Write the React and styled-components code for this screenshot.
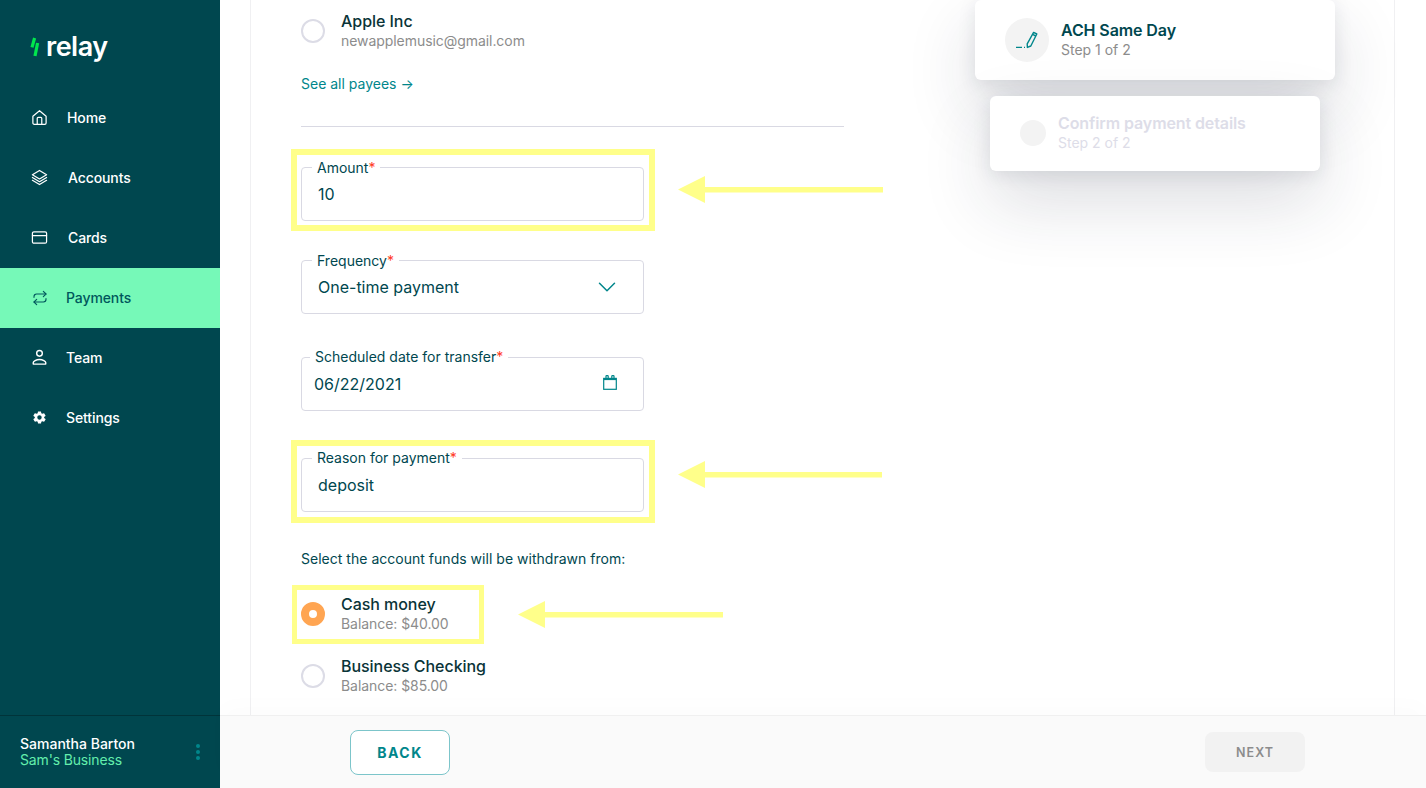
import React from "react";
import styled, { createGlobalStyle } from "styled-components";
import { ChevronDown, Repeat } from "lucide-react";
import { IoMdSettings } from "react-icons/io";

const GlobalStyle = createGlobalStyle`
  html, body { margin: 0; padding: 0; height: 100%; }
  body { font-family: Inter, "Liberation Sans", sans-serif; color: #00474f; background: #fff; }
  * { box-sizing: border-box; }
`;

const Page = styled.div`
  display: flex;
  width: 100%;
  height: 100vh;
  overflow: hidden;
`;

const Sidebar = styled.aside`
  flex: 0 0 220px;
  display: flex;
  flex-direction: column;
  background: #00474f;
  color: #fff;
`;

const Logo = styled.div`
  display: flex;
  align-items: center;
  gap: 6px;
  height: 88px;
  padding: 5px 0 0 30px;
  font-size: 27px;
  font-weight: 600;
  letter-spacing: -0.5px;
`;

const Nav = styled.nav`
  flex: 1;
  display: flex;
  flex-direction: column;
`;

const NavItem = styled.a`
  display: flex;
  align-items: center;
  gap: ${(p) => p.$gap || 18}px;
  height: 60px;
  padding: 0 0 1px 31px;
  font-size: 14px;
  font-weight: 500;
  letter-spacing: -0.1px;
  color: ${(p) => (p.$active ? "#00575c" : "#fff")};
  background: ${(p) => (p.$active ? "#76f9b8" : "transparent")};
`;

const IconSlot = styled.span`
  flex: 0 0 17px;
  display: flex;
  align-items: center;
  justify-content: center;
  width: 17px;
  height: 17px;
`;

const UserBlock = styled.div`
  display: flex;
  align-items: center;
  justify-content: space-between;
  height: 73px;
  padding: 0 20px;
  border-top: 1px solid #00343a;
  font-size: 14px;
  line-height: 16px;
`;

const UserName = styled.div`
  color: #fff;
  font-weight: 500;
`;

const BusinessName = styled.div`
  color: #63eeac;
  font-weight: 400;
  letter-spacing: -0.15px;
`;

const Dots = styled.div`
  display: flex;
  flex-direction: column;
  gap: 2px;
  span { width: 4px; height: 4px; border-radius: 50%; background: #00868b; }
`;

const Main = styled.main`
  flex: 1;
  min-width: 0;
  display: flex;
  flex-direction: column;
`;

const Scroller = styled.div`
  flex: 1;
  min-height: 0;
  overflow: hidden;
`;

const Panel = styled.div`
  display: flex;
  gap: 131px;
  height: 100%;
  margin: 0 31px 0 30px;
  padding-left: 50px;
  border-left: 1px solid #f0f0f2;
  border-right: 1px solid #f0f0f2;
`;

const FormColumn = styled.div`
  flex: 0 0 543px;
  padding-top: 11px;
`;

const OptionRow = styled.div`
  display: flex;
  align-items: center;
  gap: 16px;
  margin-top: ${(p) => p.$top || 0}px;
`;

const Radio = styled.span`
  flex: 0 0 24px;
  width: 24px;
  height: 24px;
  border-radius: 50%;
  background: #fff;
  border: ${(p) => (p.$checked ? "8px solid #ffa552" : "2px solid #dcdce6")};
`;

const OptionName = styled.div`
  font-size: 16px;
  font-weight: 500;
  line-height: 20px;
  letter-spacing: -0.05px;
  color: #0a3438;
`;

const OptionSub = styled.div`
  font-size: 14px;
  line-height: 20px;
  letter-spacing: -0.06px;
  color: #8c8c8c;
`;

const SeeAll = styled.a`
  display: block;
  margin-top: 23px;
  font-size: 14px;
  font-weight: 400;
  line-height: 20px;
  color: #00868b;
`;

const Divider = styled.hr`
  height: 1px;
  margin: 32px 0 0;
  border: 0;
  background: #d9d9e3;
`;

const Marked = styled.div`
  position: relative;
  margin-top: ${(p) => p.$top}px;
  &::after {
    content: "";
    position: absolute;
    inset: ${(p) => p.$inset};
    border: ${(p) => p.$border || 6}px solid #ffff8a;
    pointer-events: none;
  }
`;

const Arrow = styled.svg`
  position: absolute;
  left: ${(p) => p.$left}px;
  top: ${(p) => p.$y}px;
`;

const Field = styled.div`
  position: relative;
  display: flex;
  align-items: center;
  justify-content: space-between;
  width: 343px;
  height: 54px;
  margin-top: ${(p) => p.$top || 0}px;
  padding: 0 ${(p) => p.$right || 16}px 0 ${(p) => p.$left || 16}px;
  border: 1px solid #d9d9e3;
  border-radius: 4px;
  background: #fff;
`;

const FieldLabel = styled.label`
  position: absolute;
  left: ${(p) => p.$left || 10}px;
  top: ${(p) => p.$y || -9}px;
  padding: 0 5px;
  background: #fff;
  font-size: 14px;
  line-height: 16px;
  color: #00474f;
  b { font-weight: 400; color: #ff3b1f; }
`;

const FieldValue = styled.span`
  font-size: 16px;
  color: #00474f;
`;

const AccountPrompt = styled.div`
  margin-top: 37px;
  font-size: 14px;
  line-height: 20px;
  letter-spacing: 0.02px;
  color: #00474f;
`;

const StepColumn = styled.div`
  flex: 0 0 360px;
  display: flex;
  flex-direction: column;
  align-items: center;
  gap: 16px;
`;

const StepCard = styled.div`
  position: relative;
  display: flex;
  align-items: center;
  gap: 12px;
  width: ${(p) => (p.$faded ? 330 : 360)}px;
  height: ${(p) => (p.$faded ? 75 : 80)}px;
  padding: 0 0 ${(p) => (p.$faded ? 2 : 0)}px 30px;
  border-radius: 6px;
  background: #fff;
  box-shadow: 0 4px 18px rgba(30, 35, 60, 0.1), 0 30px 70px rgba(30, 35, 60, 0.16);
`;

const StepCircle = styled.div`
  display: flex;
  align-items: center;
  justify-content: center;
  flex: 0 0 auto;
  width: ${(p) => (p.$faded ? 26 : 44)}px;
  height: ${(p) => (p.$faded ? 26 : 44)}px;
  border-radius: 50%;
  background: #f3f3f3;
`;

const StepTitle = styled.div`
  font-size: 16px;
  font-weight: 600;
  line-height: 20px;
  letter-spacing: -0.1px;
  color: ${(p) => (p.$faded ? "#dddde8" : "#00474f")};
`;

const StepSub = styled.div`
  font-size: 14px;
  line-height: 20px;
  color: ${(p) => (p.$faded ? "#dddde8" : "#8c8c8c")};
`;

const Footer = styled.footer`
  flex: 0 0 73px;
  display: flex;
  align-items: center;
  justify-content: space-between;
  padding: 0 121px 0 130px;
  background: #fafafa;
  border-top: 1px solid #f0f0f0;
  box-shadow: 0 -12px 20px rgba(0, 0, 0, 0.012);
`;

const BackButton = styled.button`
  width: 100px;
  height: 45px;
  border: 1px solid #7cc5ca;
  border-radius: 8px;
  background: #fff;
  font: 700 14px Inter, sans-serif;
  letter-spacing: 1.5px;
  color: #00868b;
`;

const NextButton = styled.button`
  width: 100px;
  height: 40px;
  border: 0;
  border-radius: 8px;
  background: #f2f2f2;
  font: 600 12.5px Inter, sans-serif;
  letter-spacing: 1px;
  color: #8c8c8c;
`;

const line = { fill: "none", stroke: "currentColor", strokeWidth: 1.3, strokeLinecap: "round", strokeLinejoin: "round" };

const Bolt = () => (
  <svg width="10" height="20" viewBox="0 0 10 20" fill="none" stroke="#00e64d" strokeWidth="3.2">
    <path d="M4.6 1 2 10.4" />
    <path d="M7.6 6 5 19" />
  </svg>
);

const HomeIcon = () => (
  <svg width="17" height="17" viewBox="0 0 18 18" {...line}>
    <path d="M2 7.6 9 1.8l7 5.8v7.2a1.4 1.4 0 0 1-1.4 1.4H3.4A1.4 1.4 0 0 1 2 14.8z" />
    <path d="M6.6 16.2V9.8a1 1 0 0 1 1-1h2.8a1 1 0 0 1 1 1v6.4" />
  </svg>
);

const LayersIcon = () => (
  <svg width="17" height="17" viewBox="0 0 18 18" {...line}>
    <path d="M9 1.5 16.5 6 9 10.5 1.5 6z" />
    <path d="M1.5 9 9 13.5 16.5 9" />
    <path d="M1.5 12 9 16.5 16.5 12" />
  </svg>
);

const CardIcon = () => (
  <svg width="17" height="17" viewBox="0 0 18 18" {...line}>
    <rect x="1.5" y="3" width="15" height="12" rx="1.6" />
    <path d="M1.5 7h15" />
  </svg>
);

const TeamIcon = () => (
  <svg width="17" height="17" viewBox="0 0 18 18" {...line} strokeWidth="1.5">
    <circle cx="9" cy="4.6" r="3" />
    <path d="M2.4 16v-1.6c0-1.4 3-3.2 6.6-3.2s6.6 1.8 6.6 3.2V16z" />
  </svg>
);

const PenIcon = () => (
  <svg width="24" height="24" viewBox="0 0 24 24" fill="none" stroke="#00868b" strokeWidth="1.4" strokeLinejoin="round">
    <path d="M18.6 4.4 21.8 6 15.8 18 12.4 19.4 12.2 15.8z" />
    <path d="M17.6 6.4 20.8 8" />
    <path d="M1 19.4h6M9 19.4h1" />
  </svg>
);

const CalendarIcon = () => (
  <svg width="14" height="15" viewBox="0 0 14 15" fill="none" stroke="#00868b" strokeWidth="1.2" style={{ marginTop: -4 }}>
    <rect x="0.7" y="3.4" width="12.6" height="10.9" />
    <path d="M0.7 4.2h12.6" strokeWidth="1.8" />
    <path d="M3 3.4V1.2a.6.6 0 0 1 .6-.6h1a.6.6 0 0 1 .6.6v2.2M8.8 3.4V1.2a.6.6 0 0 1 .6-.6h1a.6.6 0 0 1 .6.6v2.2" />
  </svg>
);

const YellowArrow = ({ left, y, length }) => (
  <Arrow $left={left} $y={y} width={length} height="27" viewBox={`0 0 ${length} 27`}>
    <path d={`M0 13.5 27 0V11H${length}V16.5H27V27Z`} fill="#ffff8a" />
  </Arrow>
);

const navItems = [
  { label: "Home", icon: <HomeIcon />, gap: 19 },
  { label: "Accounts", icon: <LayersIcon />, gap: 20 },
  { label: "Cards", icon: <CardIcon />, gap: 20 },
  { label: "Payments", icon: <Repeat size={16} strokeWidth={1.7} />, active: true },
  { label: "Team", icon: <TeamIcon /> },
  { label: "Settings", icon: <IoMdSettings size={15} /> },
];

export default function App() {
  return (
    <Page>
      <GlobalStyle />
      <Sidebar>
        <Logo>
          <Bolt />
          relay
        </Logo>
        <Nav>
          {navItems.map((item) => (
            <NavItem key={item.label} $active={item.active} $gap={item.gap}>
              <IconSlot>{item.icon}</IconSlot>
              {item.label}
            </NavItem>
          ))}
        </Nav>
        <UserBlock>
          <div>
            <UserName>Samantha Barton</UserName>
            <BusinessName>Sam's Business</BusinessName>
          </div>
          <Dots>
            <span />
            <span />
            <span />
          </Dots>
        </UserBlock>
      </Sidebar>

      <Main>
        <Scroller>
          <Panel>
            <FormColumn>
              <OptionRow>
                <Radio />
                <div>
                  <OptionName>Apple Inc</OptionName>
                  <OptionSub>newapplemusic@gmail.com</OptionSub>
                </div>
              </OptionRow>
              <SeeAll>See all payees →</SeeAll>
              <Divider />

              <Marked $top={40} $inset="-18px 189px -10px -10px">
                <Field>
                  <FieldLabel $y={-8}>
                    Amount<b>*</b>
                  </FieldLabel>
                  <FieldValue>10</FieldValue>
                </Field>
                <YellowArrow left={377} y={9} length={205} />
              </Marked>

              <Field $top={39} $right={21}>
                <FieldLabel $y={-8}>
                  Frequency<b>*</b>
                </FieldLabel>
                <FieldValue>One-time payment</FieldValue>
                <ChevronDown size={30} color="#00868b" strokeWidth={1.2} />
              </Field>

              <Field $top={43} $left={12} $right={26}>
                <FieldLabel $left={8}>
                  Scheduled date for transfer<b>*</b>
                </FieldLabel>
                <FieldValue>06/22/2021</FieldValue>
                <CalendarIcon />
              </Field>

              <Marked $top={47} $inset="-18px 189px -11px -10px">
                <Field>
                  <FieldLabel>
                    Reason for payment<b>*</b>
                  </FieldLabel>
                  <FieldValue>deposit</FieldValue>
                </Field>
                <YellowArrow left={377} y={3} length={204} />
              </Marked>

              <AccountPrompt>Select the account funds will be withdrawn from:</AccountPrompt>

              <Marked $top={25} $inset="-9px 360px -10px -9px" $border={5}>
                <OptionRow>
                  <Radio $checked />
                  <div>
                    <OptionName>Cash money</OptionName>
                    <OptionSub>Balance: $40.00</OptionSub>
                  </div>
                </OptionRow>
                <YellowArrow left={217} y={7} length={205} />
              </Marked>

              <OptionRow $top={22}>
                <Radio />
                <div>
                  <OptionName>Business Checking</OptionName>
                  <OptionSub>Balance: $85.00</OptionSub>
                </div>
              </OptionRow>
            </FormColumn>

            <StepColumn>
              <StepCard>
                <StepCircle>
                  <PenIcon />
                </StepCircle>
                <div>
                  <StepTitle>ACH Same Day</StepTitle>
                  <StepSub>Step 1 of 2</StepSub>
                </div>
              </StepCard>
              <StepCard $faded>
                <StepCircle $faded />
                <div>
                  <StepTitle $faded>Confirm payment details</StepTitle>
                  <StepSub $faded>Step 2 of 2</StepSub>
                </div>
              </StepCard>
            </StepColumn>
          </Panel>
        </Scroller>
        <Footer>
          <BackButton>BACK</BackButton>
          <NextButton>NEXT</NextButton>
        </Footer>
      </Main>
    </Page>
  );
}
